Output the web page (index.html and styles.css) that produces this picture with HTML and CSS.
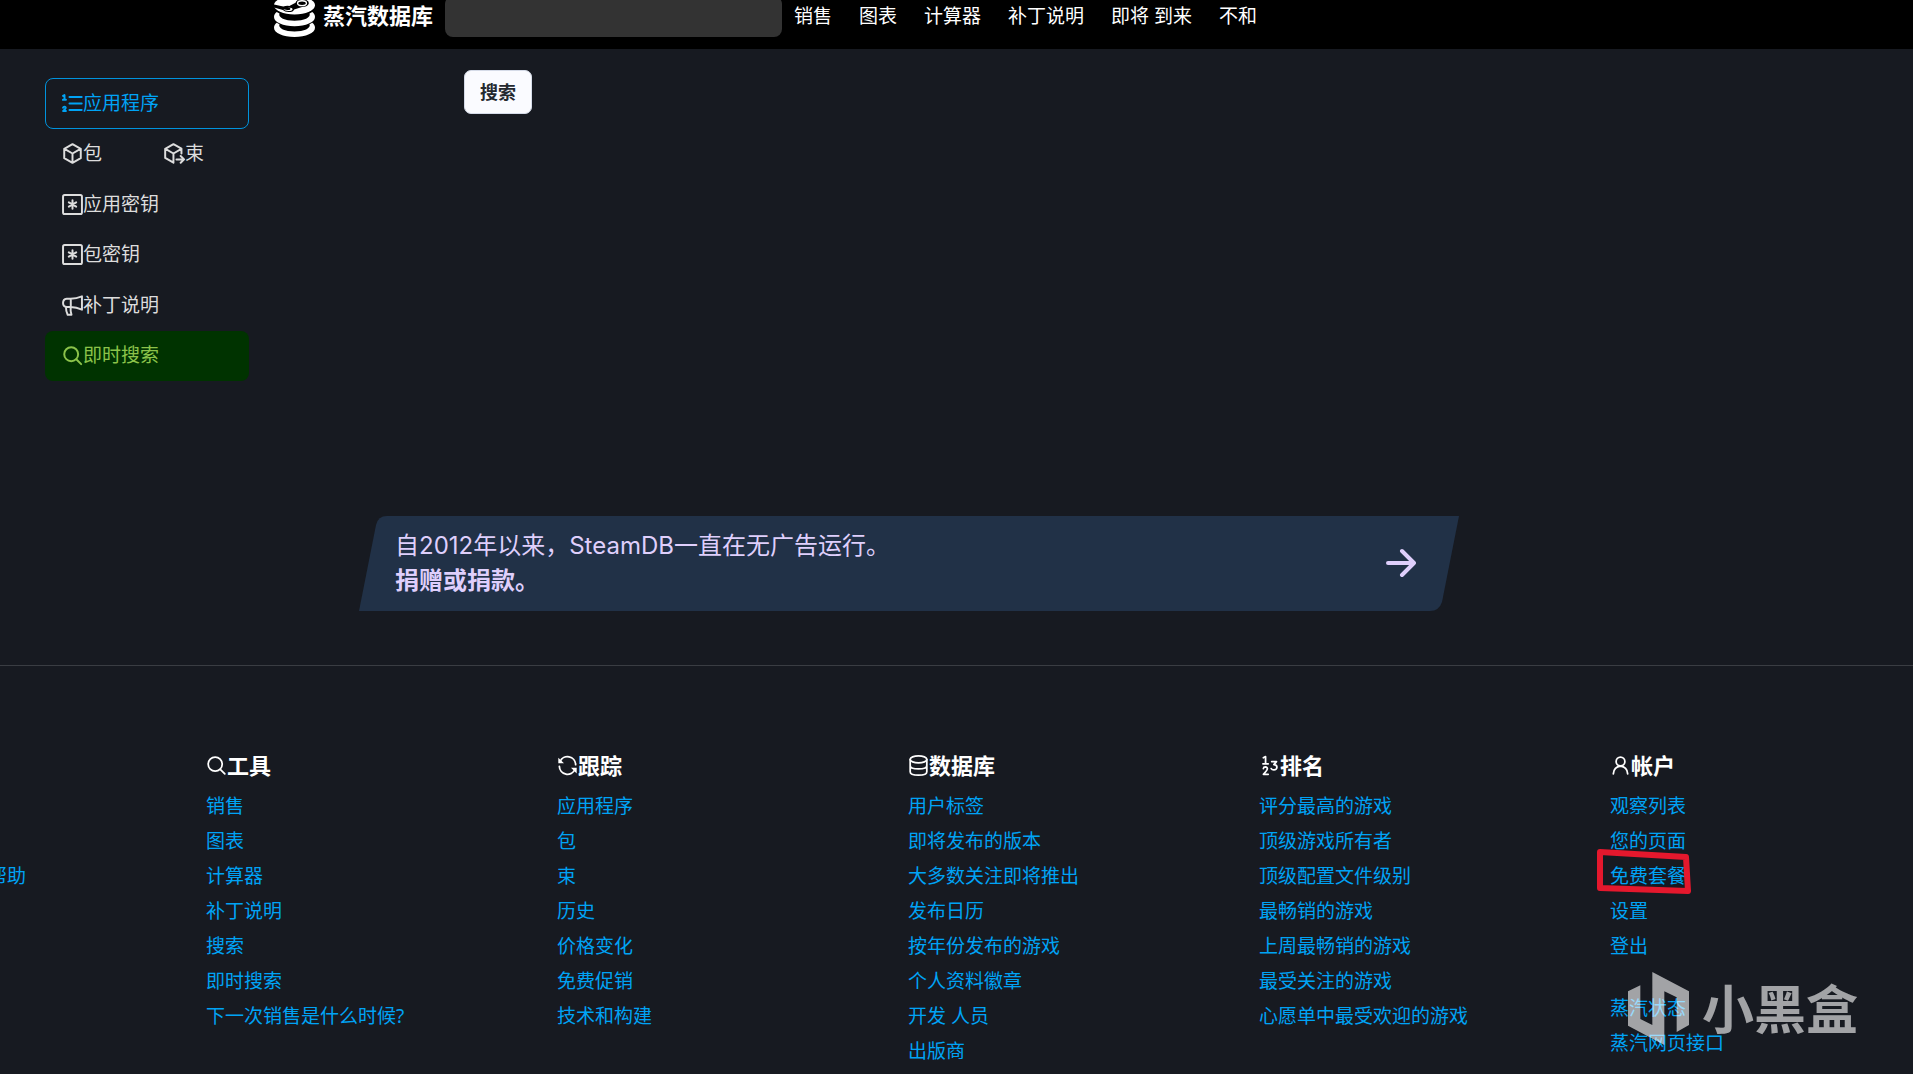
FILE: index.html
```html
<!DOCTYPE html>
<html lang="zh-CN">
<head>
<meta charset="utf-8">
<title>蒸汽数据库</title>
<link rel="stylesheet" href="styles.css">
</head>
<body>
<header class="header">
  <div class="header-inner">
    <a class="brand" href="#">
      <svg class="brand-logo" viewBox="0 0 24 24" aria-hidden="true">
        <ellipse cx="12" cy="5.4" rx="12" ry="5.4" fill="#fff"/>
        <path d="M-.2 4.9 5.4 6.2Q7 5.6 9 5.8L12.6 4Q13 1.9 16.4 1.9 20.4 2.1 20.4 4.3 20 6.4 16.4 6.5L11.8 7.9Q11.4 9.4 8.6 9.4 6.2 9.3 5.2 8.2L-.2 6.6Z" fill="#000"/>
        <ellipse cx="16.4" cy="4.2" rx="2.6" ry="1.4" fill="none" stroke="#fff" stroke-width=".8"/>
        <path d="M5.4 7.7 7 8.1Q9 8.5 9.6 7.7 9.8 6.900 8 6.700 10.800 6.600 10.900 7.700 10.600 8.800 8.400 8.800 6.300 8.700 5.400 7.700Z" fill="#fff"/>
        <path id="slab" d="M1.600 9.400C.6 10.200 0 11.200 0 12.300 0 15.400 5.400 17.700 12 17.700S24 15.400 24 12.300C24 11.200 23.400 10.200 22.400 9.400L20.800 10.300C21.800 12.700 17.500 14.500 12 14.500S2.200 12.700 3.200 10.300Z" fill="#fff"/>
        <use href="#slab" y="6.300"/>
      </svg>
      <span>蒸汽数据库</span>
    </a>
    <input class="header-search" type="search" aria-label="搜索">
    <nav class="nav">
      <a href="#">销售</a>
      <a href="#">图表</a>
      <a href="#">计算器</a>
      <a href="#">补丁说明</a>
      <a href="#">即将 到来</a>
      <a href="#">不和</a>
    </nav>
  </div>
</header>

<main class="main">
  <nav class="side">
    <a class="side-item side-active" href="#">
      <svg class="icon" viewBox="0 0 16 16"><path d="M5.700 3H15M5.700 8H15M5.700 13H15M.8 2.200 1.900 1.600V5M.7 5.200H3M.8 11.200Q1 10.400 1.900 10.400 2.900 10.500 2.800 11.400 2.600 12.200.9 13.700H3"/></svg>应用程序</a>
    <a class="side-item side-half" href="#">
      <svg class="icon" viewBox="0 0 16 16"><path d="M8 .9 14.300 4.400V11.600L8 15.100 1.700 11.600V4.400ZM1.900 4.500 8 8 14.100 4.500M8 8V15"/></svg>包</a>
    <a class="side-item side-half" href="#">
      <svg class="icon" viewBox="0 0 16 16"><path d="M13.300 8V4.200L7.200.9.9 4.400V11.400L7.200 15V8L1.100 4.500M7.200 8 13.200 4.500M9.500 12.500H15M12.700 9.900 15.300 12.500 12.700 15.100"/></svg>束</a>
    <a class="side-item" href="#">
      <svg class="icon" viewBox="0 0 16 16"><path d="M2 .8H14Q15.200.8 15.200 2V14Q15.200 15.200 14 15.200H2Q.8 15.200.8 14V2Q.8.800 2 .8ZM8 4.700V11.300M5.200 6.400 10.800 9.600M10.800 6.400 5.200 9.600"/></svg>应用密钥</a>
    <a class="side-item" href="#">
      <svg class="icon" viewBox="0 0 16 16"><path d="M2 .8H14Q15.200.8 15.200 2V14Q15.200 15.200 14 15.200H2Q.8 15.200.8 14V2Q.8.800 2 .8ZM8 4.700V11.300M5.200 6.400 10.800 9.600M10.800 6.400 5.200 9.600"/></svg>包密钥</a>
    <a class="side-item" href="#">
      <svg class="icon" viewBox="0 0 16 16"><path d="M15.200 1V11.200Q11 9.300 6.500 9.200H3.600Q.8 8.800.8 6 .8 3.200 3.600 2.800H6.500Q11 2.700 15.200 1ZM6.700 2.800V9.200M3 9.200Q3 12.500 4.300 15H7.200Q6.300 12.500 6.600 9.300"/></svg>补丁说明</a>
    <a class="side-item side-instant" href="#">
      <svg class="icon" viewBox="0 0 16 16"><circle cx="7" cy="7" r="5.300"/><path d="M10.900 10.900 14.600 14.600"/></svg>即时搜索</a>
  </nav>
  <form class="search">
    <button class="search-btn" type="button">搜索</button>
  </form>
</main>

<a class="banner" href="#">
  <svg class="banner-bg" viewBox="0 0 1100 95" preserveAspectRatio="none" aria-hidden="true"><path d="M0 95 17 9Q19 0 28 0H1100L1083 86Q1080 95 1071 95Z"/></svg>
  <span class="banner-text">自2012年以来，SteamDB一直在无广告运行。<br><strong>捐赠或捐款。</strong></span>
  <svg class="banner-arrow" viewBox="0 0 30 30" aria-hidden="true"><path d="M2 15H28M16 3 28 15 16 27"/></svg>
</a>

<footer class="footer">
  <section class="col col-first">
    <ul><li><a href="#">帮助</a></li></ul>
  </section>
  <section class="col">
    <h2><svg class="icon thin" viewBox="0 0 24 24"><circle cx="10.500" cy="10.500" r="8"/><path d="M16.300 16.300 21.500 21.500"/></svg>工具</h2>
    <ul>
      <li><a href="#">销售</a></li>
      <li><a href="#">图表</a></li>
      <li><a href="#">计算器</a></li>
      <li><a href="#">补丁说明</a></li>
      <li><a href="#">搜索</a></li>
      <li><a href="#">即时搜索</a></li>
      <li><a href="#">下一次销售是什么时候?</a></li>
    </ul>
  </section>
  <section class="col">
    <h2><svg class="icon thin" viewBox="0 0 24 24"><path d="M3.500 7.500A9.300 9.300 0 0 1 21.300 11M20.500 16.500A9.300 9.300 0 0 1 2.700 13"/><path class="solid" d="M1.500 3V9.500H8ZM22.500 21V14.500H16Z"/></svg>跟踪</h2>
    <ul>
      <li><a href="#">应用程序</a></li>
      <li><a href="#">包</a></li>
      <li><a href="#">束</a></li>
      <li><a href="#">历史</a></li>
      <li><a href="#">价格变化</a></li>
      <li><a href="#">免费促销</a></li>
      <li><a href="#">技术和构建</a></li>
    </ul>
  </section>
  <section class="col">
    <h2><svg class="icon thin" viewBox="0 0 24 24"><ellipse cx="12" cy="5" rx="9.500" ry="4"/><path d="M2.500 5V19C2.500 24.300 21.500 24.300 21.500 19V5M2.500 12C2.500 17.300 21.500 17.300 21.500 12"/></svg>数据库</h2>
    <ul>
      <li><a href="#">用户标签</a></li>
      <li><a href="#">即将发布的版本</a></li>
      <li><a href="#">大多数关注即将推出</a></li>
      <li><a href="#">发布日历</a></li>
      <li><a href="#">按年份发布的游戏</a></li>
      <li><a href="#">个人资料徽章</a></li>
      <li><a href="#">开发 人员</a></li>
      <li><a href="#">出版商</a></li>
    </ul>
  </section>
  <section class="col">
    <h2><svg class="icon thin" viewBox="0 0 24 24"><path d="M5 3.200 7.500 1.800V10M4.500 10H10.500M5 15.500Q5.200 13.700 7.300 13.700 9.800 13.900 9.500 16 9.300 17.700 5 22H10.500M14.500 7.500H20L17 11Q20.500 11 20.500 14 20.200 17 17 17 14.800 17 14 15.500"/></svg>排名</h2>
    <ul>
      <li><a href="#">评分最高的游戏</a></li>
      <li><a href="#">顶级游戏所有者</a></li>
      <li><a href="#">顶级配置文件级别</a></li>
      <li><a href="#">最畅销的游戏</a></li>
      <li><a href="#">上周最畅销的游戏</a></li>
      <li><a href="#">最受关注的游戏</a></li>
      <li><a href="#">心愿单中最受欢迎的游戏</a></li>
    </ul>
  </section>
  <section class="col">
    <h2><svg class="icon thin" viewBox="0 0 24 24"><circle cx="12" cy="7.500" r="5"/><path d="M3.800 21.500Q4.500 13.500 12 12.800 19.500 13.500 20.200 21.500"/></svg>帐户</h2>
    <ul>
      <li><a href="#">观察列表</a></li>
      <li><a href="#">您的页面</a></li>
      <li class="marked"><a href="#">免费套餐</a>
        <svg class="mark" viewBox="0 0 94 45" aria-hidden="true"><path d="M3 3 89 8 91 42 3 39Z"/></svg></li>
      <li><a href="#">设置</a></li>
      <li><a href="#">登出</a></li>
    </ul>
    <ul class="more">
      <li><a href="#">蒸汽状态</a></li>
      <li><a href="#">蒸汽网页接口</a></li>
    </ul>
  </section>
</footer>

<div class="watermark">
  <svg class="watermark-logo" viewBox="144 727 183 219" aria-hidden="true"><path d="M144 785 181 767V868L217 886V727L327 785V886L290 907V803L253 785V946L144 888Z"/></svg>
  <span>小黑盒</span>
</div>
</body>
</html>
```
FILE: styles.css
```css
* {
  box-sizing: border-box;
}

body {
  position: relative;
  height: 100vh;
  margin: 0;
  overflow: hidden;
  background: #171a21;
  color: #ddd;
  font-family: "Noto Sans", "Noto Sans CJK SC", sans-serif;
  font-size: 19px;
  line-height: 35px;
}

a {
  color: #00a3f5;
  text-decoration: none;
}

.icon {
  flex: none;
  width: 21px;
  height: 21px;
  fill: none;
  stroke: currentColor;
  stroke-width: 1.5;
  stroke-linejoin: round;
  stroke-linecap: round;
}

.thin {
  stroke-width: 2;
}

.solid {
  fill: currentColor;
  stroke: none;
}

/* Top bar */
.header {
  display: flex;
  justify-content: center;
  align-items: flex-end;
  height: 49px;
  padding-bottom: 12px;
  background: #000;
  overflow: hidden;
}

.header-inner {
  display: flex;
  flex: 0 1 1365px;
  align-items: center;
}

.brand {
  display: flex;
  align-items: center;
  gap: 8px;
  margin-right: 12px;
  color: #fff;
  font-size: 22px;
  line-height: 33px;
  font-weight: 700;
  white-space: nowrap;
}

.brand span {
  padding-bottom: 2px;
}

.brand-logo {
  width: 41px;
  height: 41px;
}

.header-search {
  width: 337px;
  height: 41px;
  border: 0;
  border-radius: 8px;
  background: #333;
  color: #fff;
  font: inherit;
}

.nav {
  display: flex;
  gap: 27px;
  margin-left: 12px;
  white-space: nowrap;
}

.nav a {
  color: #fff;
}

/* Sidebar and search */
.main {
  display: flex;
  align-items: flex-start;
  gap: 215px;
  padding: 21px 45px 135px;
}

.side {
  display: grid;
  grid-template-columns: 1fr 1fr;
  grid-auto-rows: 1fr;
  width: 204px;
  min-height: 303px;
  margin-top: 8px;
}

.side-item {
  display: flex;
  grid-column: span 2;
  align-items: center;
  padding-left: 17px;
  border-radius: 8px;
  color: #ddd;
}

.side-half {
  grid-column: span 1;
}

.side-active {
  padding-left: 16px;
  border: 1px solid #0093dd;
  color: #00a3f5;
}

.side-instant {
  background: #030;
  color: #8bc34a;
}

.search-btn {
  height: 44px;
  padding: 0 15px;
  border: 1px solid #d5dbe8;
  border-radius: 7px;
  background: #fafbff;
  color: #24292f;
  font: inherit;
  font-size: 18px;
  font-weight: 700;
}

/* Donation banner */
.banner {
  display: flex;
  position: relative;
  justify-content: space-between;
  align-items: center;
  max-width: 1100px;
  height: 95px;
  margin: 0 359px 54px;
  padding: 0 43px 2px 36px;
  color: #dfcffc;
  font-family: Inter, "Noto Sans CJK SC", sans-serif;
  font-size: 24px;
}

.banner-bg {
  position: absolute;
  inset: 0;
  width: 100%;
  height: 100%;
  fill: #213147;
}

.banner-text {
  position: relative;
}

.banner-arrow {
  position: relative;
  width: 30px;
  height: 30px;
  fill: none;
  stroke: currentColor;
  stroke-width: 4;
  stroke-linecap: round;
  stroke-linejoin: round;
}

/* Footer */
.footer {
  display: grid;
  grid-template-columns: 206fr repeat(4, 351fr) 303fr;
  padding-top: 79px;
  border-top: 1px solid #3a3d43;
  white-space: nowrap;
}

.col h2 {
  display: flex;
  align-items: center;
  height: 41px;
  margin: 0 0 3px;
  color: #fff;
  font-size: 22px;
}

.col ul {
  margin: 0;
  padding: 0;
  list-style: none;
}

.col .more {
  margin-top: 27px;
}

.col-first {
  margin-left: -12px;
  padding-top: 114px;
}

.marked {
  position: relative;
}

.mark {
  position: absolute;
  top: -10px;
  left: -13px;
  width: 94px;
  height: 45px;
  fill: none;
  stroke: #e5182d;
  stroke-width: 6;
  stroke-linejoin: round;
}

.watermark {
  display: flex;
  position: absolute;
  right: 55px;
  bottom: 29px;
  align-items: center;
  gap: 13px;
  color: #fff;
  font-size: 52px;
  font-weight: 700;
  opacity: .6;
  pointer-events: none;
}

.watermark-logo {
  width: 61px;
  height: 73px;
  fill: currentColor;
}
```
